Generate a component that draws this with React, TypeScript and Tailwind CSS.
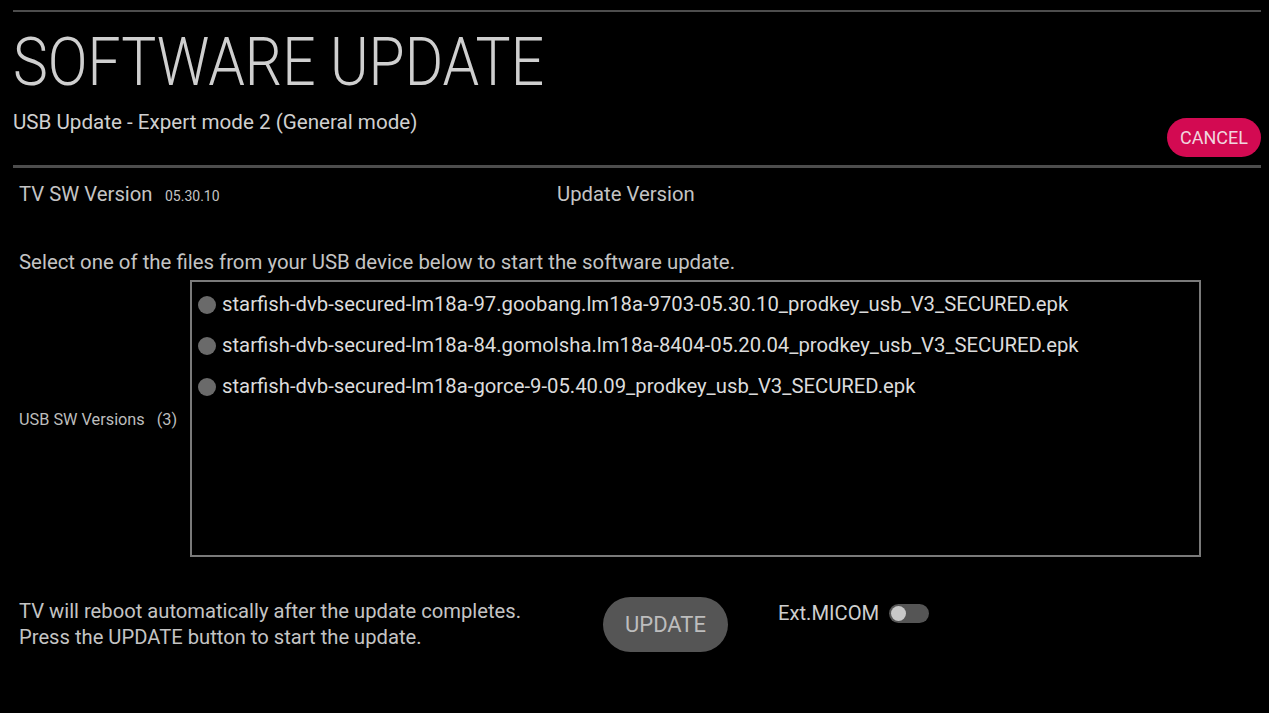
import React from 'react';

const files = [
  'starfish-dvb-secured-lm18a-97.goobang.lm18a-9703-05.30.10_prodkey_usb_V3_SECURED.epk',
  'starfish-dvb-secured-lm18a-84.gomolsha.lm18a-8404-05.20.04_prodkey_usb_V3_SECURED.epk',
  'starfish-dvb-secured-lm18a-gorce-9-05.40.09_prodkey_usb_V3_SECURED.epk',
];

const App: React.FC = () => {
  return (
    <div className="w-[1269px] h-[713px] bg-black text-[#c4c4c4] overflow-hidden font-['Roboto','Noto_Sans',sans-serif]">
      <div className="pl-[13px] pr-[8px] pt-[10px]">
        <div className="h-[2px] bg-[#4d4d4d]"></div>

        {/* header */}
        <div className="flex items-end justify-between">
          <div>
            <h1 className="mt-[18px] text-[66px] leading-[66px] font-light text-[#cfcfcf] origin-left scale-x-[0.89] whitespace-nowrap">
              SOFTWARE UPDATE
            </h1>
            <p className="mt-[14px] text-[20.6px] leading-[24px] text-[#d0d0d0]">USB Update - Expert mode 2 (General mode)</p>
          </div>
          <button className="mb-[-23px] h-[39px] w-[94px] rounded-full bg-[#d30a52] text-[18px] text-[#f1d5df]">
            CANCEL
          </button>
        </div>

        <div className="mt-[31px] h-[3px] bg-[#4d4d4d]"></div>
      </div>

      {/* versions */}
      <div className="pl-[19px] mt-[14px] flex items-baseline text-[20.3px] leading-[24px]">
        <span className="w-[146px]">TV SW Version</span>
        <span className="text-[14px] w-[392px]">05.30.10</span>
        <span>Update Version</span>
      </div>

      <p className="pl-[19px] mt-[42px] text-[20.4px] leading-[24px]">
        Select one of the files from your USB device below to start the software update.
      </p>

      {/* file list */}
      <div className="mt-[6px] flex items-center">
        <div className="w-[190px] pl-[19px] mt-[4px] text-[16.3px] flex gap-[12px] text-[#bdbdbd]">
          <span>USB SW Versions</span>
          <span>(3)</span>
        </div>
        <div className="w-[1011px] h-[277px] border-2 border-[#7a7a7a] pt-[2px] pl-[6px]">
          {files.map((f) => (
            <div key={f} className="h-[41px] flex items-center gap-[6px]">
              <span className="w-[18px] h-[18px] rounded-full bg-[#6a6a6a]"></span>
              <span className="text-[20.3px] text-[#dcdcdc] whitespace-nowrap">{f}</span>
            </div>
          ))}
        </div>
      </div>

      {/* footer */}
      <div className="mt-[40px] pl-[19px] flex items-start">
        <div className="w-[584px] pt-[1px] text-[20.2px] leading-[26px]">
          <p>TV will reboot automatically after the update completes.</p>
          <p>Press the UPDATE button to start the update.</p>
        </div>
        <button className="h-[55px] w-[125px] rounded-full bg-[#555555] text-[22px] text-[#bdbdbd]">UPDATE</button>
        <div className="ml-[50px] mt-[1px] flex items-center gap-[10px]">
          <span className="text-[20.2px] text-[#cfcfcf]">Ext.MICOM</span>
          <span className="w-[40px] h-[19px] rounded-full bg-[#555555] flex items-center px-[2px]">
            <span className="w-[15px] h-[15px] rounded-full bg-[#c8c8c8]"></span>
          </span>
        </div>
      </div>
    </div>
  );
};

export default App;
